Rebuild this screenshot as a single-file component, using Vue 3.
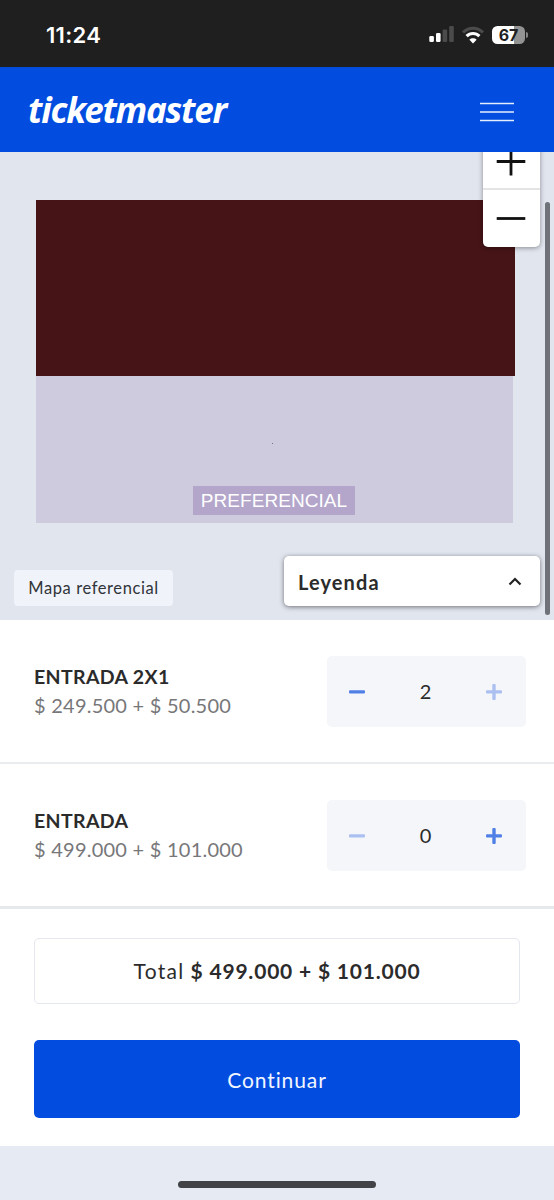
<script setup>
import { reactive } from 'vue'

const tickets = reactive([
  { id: 'a', name: 'ENTRADA 2X1', price: '$ 249.500 + $ 50.500', qty: 2, canAdd: false },
  { id: 'b', name: 'ENTRADA', price: '$ 499.000 + $ 101.000', qty: 0, canAdd: true },
])
</script>

<template>
  <div class="screen">
    <div class="status">
      <span class="time">11:24</span>
      <svg class="signal" width="26" height="18" viewBox="0 0 26 18">
        <rect x="0.3" y="10" width="4.6" height="6" rx="1.3" fill="#fff" />
        <rect x="7" y="7" width="4.6" height="9" rx="1.3" fill="#fff" />
        <rect x="13.6" y="3.500" width="4.6" height="12.5" rx="1.3" fill="#4b4b4b" />
        <rect x="20.2" y="0" width="4.6" height="16" rx="1.3" fill="#4b4b4b" />
      </svg>
      <svg class="wifi" width="24" height="18" viewBox="0 0 24 18">
        <path d="M2 6.5C7.5 .8 16.500 .8 22 6.500" fill="none" stroke="#4b4b4b" stroke-width="3.2" />
        <path d="M5.6 10.2c3.6-3.6 9.2-3.6 12.8 0" fill="none" stroke="#fff" stroke-width="3.1" />
        <path d="M12 17.4L8.4 13.7c2-1.9 5.2-1.9 7.2 0z" fill="#fff" />
      </svg>
      <div class="battery"><span>67</span></div>
      <i class="nub"></i>
    </div>

    <header class="header">
      <span class="logo">ticketmaster</span>
      <svg class="burger" width="34" height="20" viewBox="0 0 34 20">
        <path d="M0 1.500h34M0 10h34M0 18.500h34" stroke="#e4edff" stroke-width="1.500" />
      </svg>
    </header>

    <section class="map">
      <div class="stage"></div>
      <div class="zone">
        <i class="dot"></i>
        <span class="tag"><span>PREFERENCIAL</span></span>
      </div>
      <div class="map-foot">
        <div class="note"><span>Mapa referencial</span></div>
        <div class="legend">
          <span>Leyenda</span>
          <svg width="14" height="9" viewBox="0 0 14 9"><path d="M1.500 7.500L7 2l5.500 5.500" fill="none" stroke="#222" stroke-width="2.2" /></svg>
        </div>
      </div>
      <div class="zoom">
        <div class="zoom-in">
          <svg width="30" height="30" viewBox="0 0 30 30"><path d="M.7 15.500h28.600M15 1.500v28" stroke="#111" stroke-width="2.800" /></svg>
        </div>
        <div class="zoom-out">
          <svg width="30" height="30" viewBox="0 0 30 30"><path d="M.7 14.500h28.600" stroke="#111" stroke-width="2.800" /></svg>
        </div>
      </div>
      <i class="scroll"></i>
    </section>

    <section v-for="t in tickets" :key="t.id" class="ticket">
      <div class="info">
        <div class="name">{{ t.name }}</div>
        <div class="price">{{ t.price }}</div>
      </div>
      <div class="stepper">
        <svg :class="{ off: t.qty === 0 }" width="16" height="18" viewBox="0 0 16 18"><rect x="0" y="8.200" width="16" height="3.400" rx="1" /></svg>
        <span class="qty">{{ t.qty }}</span>
        <svg :class="{ off: !t.canAdd }" width="16" height="18" viewBox="0 0 16 18">
          <path d="M1 8.200h5.300V3q0-1 1-1h1.400q1 0 1 1v5.200H15q1 0 1 1v1.400q0 1-1 1H9.700V17q0 1-1 1H7.300q-1 0-1-1v-5.400H1q-1 0-1-1V9.200q0-1 1-1z" />
        </svg>
      </div>
    </section>

    <section class="summary">
      <div class="total"><span class="lbl">Total</span><b>$ 499.000 + $ 101.000</b></div>
      <div class="cta"><span>Continuar</span></div>
    </section>

    <footer class="home"><i></i></footer>
  </div>
</template>

<style>
body { margin: 0; background: #fff; }
</style>

<style scoped>
.screen {
  width: 554px;
  height: 1200px;
  overflow: hidden;
  background: #fff;
  font-family: Lato, sans-serif;
  color: #2b2b2b;
}
.screen * { box-sizing: border-box; }
span, b { white-space: nowrap; }
.screen svg { display: block; flex: none; }

.status {
  height: 67px;
  background: #1f1f1f;
  display: flex;
  align-items: center;
  padding: 3px 26px 0 46px;
}
.time {
  font: 600 22px/26px Inter, sans-serif;
  letter-spacing: 0.300px;
  color: #fff;
  margin-right: auto;
}
.signal { margin-right: 6px; }
.wifi { margin-right: 7px; }
.battery {
  width: 33px;
  height: 18px;
  border-radius: 5.500px;
  background: linear-gradient(90deg, #fff 67%, #939393 67%);
  text-align: center;
  font: 700 16px/18px Inter, sans-serif;
  color: #1f1f1f;
}
.nub { width: 2px; height: 6px; margin-left: 1px; border-radius: 0 2px 2px 0; background: #858585; }

.header {
  height: 85px;
  background: #024ddf;
  display: flex;
  align-items: center;
  justify-content: space-between;
  padding: 1px 40px 0 28px;
}
.logo {
  font: italic 700 35px/40px "Noto Sans", sans-serif;
  letter-spacing: -1.200px;
  color: #fff;
}
.burger { margin-top: 3px; }

.map {
  position: relative;
  height: 468px;
  background: #e1e5ee;
  padding-top: 48px;
  overflow: hidden;
}
.stage { width: 479px; height: 176px; margin-left: 36px; background: #461417; }
.zone {
  width: 477px;
  height: 147px;
  margin-left: 36px;
  background: #cfcbdf;
  display: flex;
  flex-direction: column;
  align-items: center;
}
.dot { width: 1px; height: 1px; margin: 67px 5px 42px 0; background: #77738a; }
.tag {
  width: 162px;
  height: 29px;
  margin-right: 1px;
  background: #b3a6ca;
  color: #fff;
  font: 19px/30px "Liberation Sans", sans-serif;
  letter-spacing: 0.050px;
  text-align: center;
}
.map-foot {
  display: flex;
  justify-content: space-between;
  align-items: flex-end;
  padding: 33px 14px 0 14px;
}
.note {
  width: 159px;
  height: 36px;
  border-radius: 4px;
  background: #f0f3f9;
  color: #31343a;
  font-size: 16.500px;
  line-height: 36px;
  text-align: center;
  letter-spacing: 0.600px;
}
.legend {
  width: 256px;
  height: 50px;
  border-radius: 5px;
  background: #fff;
  box-shadow: 0 1px 5px rgba(0, 0, 0, 0.5);
  display: flex;
  align-items: center;
  justify-content: space-between;
  padding: 1px 18px 0 14px;
  font-size: 20px;
  font-weight: 700;
  letter-spacing: 1.100px;
}
.zoom {
  position: absolute;
  right: 14px;
  top: -19px;
  width: 57px;
  height: 114px;
  border-radius: 5px;
  background: #fff;
  box-shadow: 0 1px 5px rgba(0, 0, 0, 0.4);
}
.zoom-in, .zoom-out { height: 57px; display: flex; align-items: center; padding-left: 13px; }
.zoom-in { border-bottom: 2px solid #e4e4e4; }
.scroll {
  position: absolute;
  right: 4px;
  top: 50px;
  width: 5px;
  height: 413px;
  border-radius: 3px;
  background: #6f7279;
}

.ticket {
  height: 144px;
  padding: 0 28px 0 34px;
  display: flex;
  align-items: center;
  justify-content: space-between;
  border-bottom: 2px solid #e9edef;
}
.ticket + .ticket { height: 145px; border-bottom: 3px solid #e6e9ec; }
.name { font-size: 19.500px; font-weight: 700; line-height: 28px; letter-spacing: 0.350px; }
.price { font-size: 20px; line-height: 28px; letter-spacing: 0.240px; color: #77777a; }
.stepper {
  width: 199px;
  height: 71px;
  border-radius: 5px;
  background: #f5f6f9;
  display: flex;
  align-items: center;
  justify-content: space-between;
  padding: 0 24px 0 22px;
}
.stepper svg { fill: #5080e6; }
.stepper .off { fill: #abc0f1; }
.qty { font-size: 20px; line-height: 24px; }

.summary { height: 237px; padding: 29px 34px 0; }
.total {
  height: 66px;
  border: 1px solid #e4e7ee;
  border-radius: 5px;
  display: flex;
  align-items: center;
  justify-content: center;
  gap: 6px;
  padding-bottom: 2px;
  font-size: 21px;
  letter-spacing: 0.800px;
}
.lbl { letter-spacing: 1.300px; }
.cta {
  height: 78px;
  margin-top: 36px;
  border-radius: 5px;
  background: #024ddf;
  color: #f2f6ff;
  font-size: 21px;
  line-height: 79px;
  text-align: center;
  letter-spacing: 0.900px;
}
.home { height: 54px; background: #e6eaf2; display: flex; justify-content: center; padding-top: 35px; }
.home i { width: 198px; height: 7px; border-radius: 4px; background: #424346; }
</style>
